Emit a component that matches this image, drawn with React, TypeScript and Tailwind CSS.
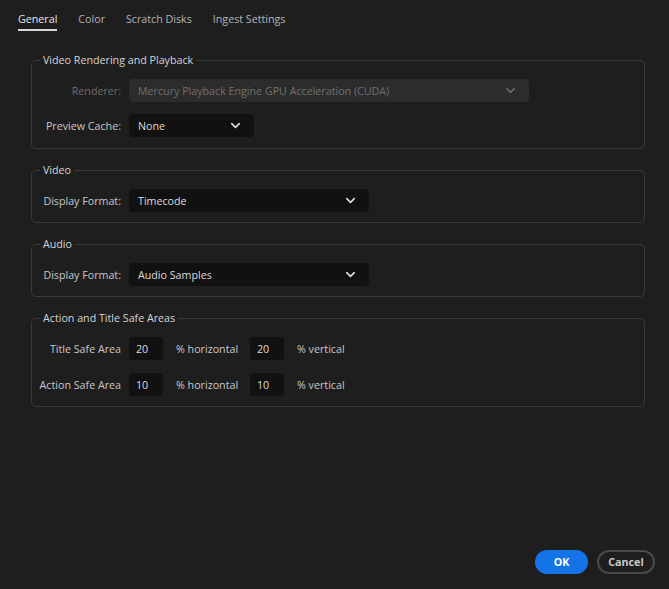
import { ChevronDown } from "lucide-react";

const font = { fontFamily: '"Open Sans", "Liberation Sans", sans-serif' };

const Select = ({ value, width, disabled }: { value: string; width: string; disabled?: boolean }) => (
  <div
    className={`flex h-[23px] items-center justify-between rounded-[4px] pl-[9px] pr-[11px] ${width} ${
      disabled ? "bg-[#2c2c2c] text-[#707070]" : "bg-[#111111] text-[#dcdcdc]"
    }`}
  >
    <span>{value}</span>
    <ChevronDown size={15} strokeWidth={2.5} className={disabled ? "text-[#6a6a6a]" : "text-[#e0e0e0]"} />
  </div>
);

const Group = ({ title, gap, pb, children }: { title: string; gap: string; pb: string; children: React.ReactNode }) => (
  <fieldset className={`rounded-[5px] border border-[#3a3a3a] pl-[10px] ${pb}`}>
    <legend className="ml-[-2px] px-[3px] leading-4 text-[#d4d4d4]">{title}</legend>
    <div className={`mt-[11px] flex flex-col ${gap}`}>{children}</div>
  </fieldset>
);

const Row = ({ label, dim, children }: { label: string; dim?: boolean; children: React.ReactNode }) => (
  <div className="flex items-center gap-[8px]">
    <div className="flex w-[79px] shrink-0 justify-end">
      <span className={`shrink-0 whitespace-nowrap ${dim ? "text-[#6e6e6e]" : "text-[#c8c8c8]"}`}>{label}</span>
    </div>
    {children}
  </div>
);

const Num = ({ v }: { v: string }) => (
  <div className="flex h-[23px] w-[34px] items-center rounded-[4px] bg-[#111111] pl-[7px] text-[#dcdcdc]">{v}</div>
);

export default function App() {
  const tabs = ["General", "Color", "Scratch Disks", "Ingest Settings"];
  return (
    <div className="flex h-[589px] w-[669px] flex-col bg-[#1e1e1e] text-[10.7px]" style={font}>
      <div className="flex gap-[21px] pl-[18px] pt-[11px]">
        {tabs.map((t, i) => (
          <div key={t} className="flex flex-col">
            <span className={i === 0 ? "text-[#e6e6e6]" : "text-[#b4b4b4]"}>{t}</span>
            <div className={`mt-[2px] h-[2px] ${i === 0 ? "bg-[#d8d8d8]" : ""}`} />
          </div>
        ))}
      </div>
      <div className="mt-[21px] flex flex-col gap-[13px] pl-[31px] pr-[24px]">
        <Group title="Video Rendering and Playback" gap="gap-[12px]" pb="pb-[11px]">
          <Row label="Renderer:" dim>
            <Select value="Mercury Playback Engine GPU Acceleration (CUDA)" width="w-[400px]" disabled />
          </Row>
          <Row label="Preview Cache:">
            <Select value="None" width="w-[125px]" />
          </Row>
        </Group>
        <Group title="Video" gap="gap-[12px]" pb="pb-[10px]">
          <Row label="Display Format:">
            <Select value="Timecode" width="w-[240px]" />
          </Row>
        </Group>
        <Group title="Audio" gap="gap-[12px]" pb="pb-[10px]">
          <Row label="Display Format:">
            <Select value="Audio Samples" width="w-[240px]" />
          </Row>
        </Group>
        <Group title="Action and Title Safe Areas" gap="gap-[13px]" pb="pb-[10px]">
          {[
            ["Title Safe Area", "20"],
            ["Action Safe Area", "10"],
          ].map(([l, v]) => (
            <Row key={l} label={l}>
              <Num v={v} />
              <span className="ml-[5px] w-[66px] text-[#c8c8c8]">% horizontal</span>
              <Num v={v} />
              <span className="ml-[5px] text-[#c8c8c8]">% vertical</span>
            </Row>
          ))}
        </Group>
      </div>
      <div className="mt-auto flex justify-end gap-[9px] pb-[15px] pr-[14px]">
        <button className="h-[24px] w-[53px] rounded-full bg-[#1473e6] font-bold text-white">OK</button>
        <button className="h-[24px] w-[58px] rounded-full border-2 border-[#4a4a4a] font-bold text-[#c8c8c8]">
          Cancel
        </button>
      </div>
    </div>
  );
}
